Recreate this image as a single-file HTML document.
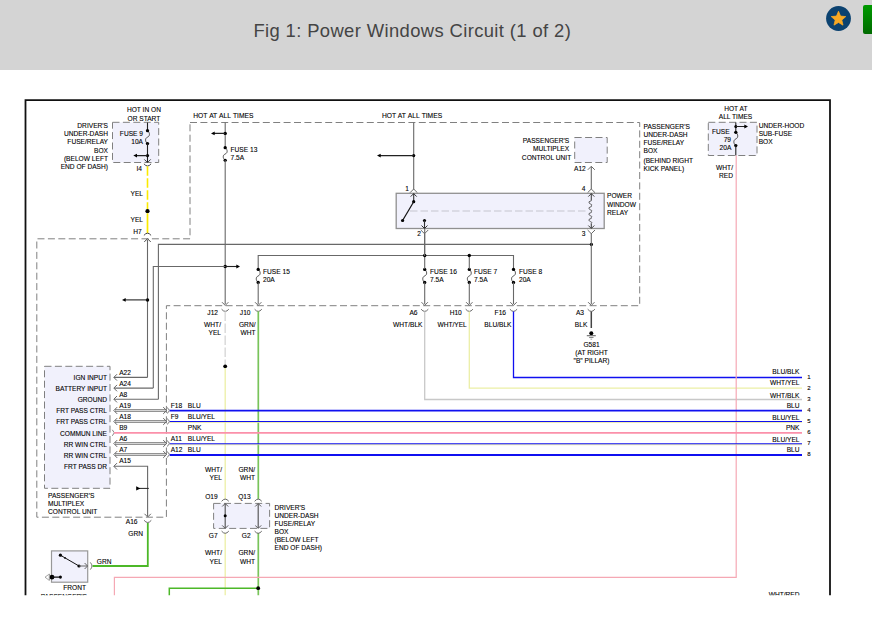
<!DOCTYPE html>
<html><head><meta charset="utf-8"><title>Fig 1: Power Windows Circuit (1 of 2)</title>
<style>
html,body{margin:0;padding:0;background:#fff;}
body{width:872px;height:622px;overflow:hidden;position:relative;font-family:"Liberation Sans",sans-serif;}
#hdr{position:absolute;left:0;top:0;width:872px;height:70px;background:#d4d4d4;}
#ttl{position:absolute;left:253.4px;top:19.9px;font-size:18.4px;color:#444;white-space:nowrap;letter-spacing:0.385px;}
#star{position:absolute;left:826px;top:6px;width:25px;height:25px;}
#btn{position:absolute;left:863px;top:5px;width:20px;height:29px;border-radius:2px;background:linear-gradient(#009a00,#006a00);}
text{font-family:"Liberation Sans",sans-serif;}
</style></head><body>
<div id="hdr"></div>
<div id="ttl">Fig 1: Power Windows Circuit (1 of 2)</div>
<svg id="star" viewBox="0 0 25 25"><circle cx="12.5" cy="12.5" r="12.4" fill="#0b4270"/><polygon points="12.50,5.24 14.52,10.12 19.77,10.58 15.81,14.07 17.01,19.13 12.50,16.46 7.99,19.13 9.19,14.07 5.23,10.58 10.48,10.12" fill="#f7a823" stroke="#f7a823" stroke-width="0.8" stroke-linejoin="round"/></svg>
<div id="btn"></div>
<svg width="872" height="622" viewBox="0 0 872 622" style="position:absolute;left:0;top:0" font-family="Liberation Sans, sans-serif">
<defs><clipPath id="cl"><rect x="0" y="70" width="872" height="525.3"/></clipPath></defs>
<g clip-path="url(#cl)">
<rect x="112.5" y="122.3" width="46.19999999999999" height="40.2" fill="#f1f1fc" stroke="#808080" stroke-width="1" stroke-dasharray="7 3.4"/>
<rect x="574.7" y="137.5" width="32.5" height="25.0" fill="#f1f1fc" stroke="#808080" stroke-width="1" stroke-dasharray="7 3.4"/>
<rect x="708.3" y="122.3" width="48.700000000000045" height="33.2" fill="#f1f1fc" stroke="#808080" stroke-width="1" stroke-dasharray="7 3.4"/>
<rect x="44.5" y="366.3" width="65.5" height="122.0" fill="#f1f1fc" stroke="#808080" stroke-width="1" stroke-dasharray="7 3.4"/>
<rect x="213.6" y="503.4" width="56.00000000000003" height="25.0" fill="#f1f1fc" stroke="#808080" stroke-width="1" stroke-dasharray="7 3.4"/>
<rect x="396.2" y="193.3" width="208.00000000000006" height="35.19999999999999" fill="#f1f1fc" stroke="#909090" stroke-width="1.3"/>
<line x1="410" y1="211" x2="588" y2="211" stroke="#c6c6ce" stroke-width="1.1" stroke-dasharray="7.5 3"/>
<rect x="51.5" y="550.9" width="36.2" height="31.300000000000068" fill="#f1f1fc" stroke="#989898" stroke-width="1.2"/>
<polyline points="190,122.5 639.7,122.5 639.7,305.7 166.4,305.7 166.4,517.2 36.8,517.2 36.8,238.8 190,238.8 190,122.5" fill="none" stroke="#808080" stroke-width="1" stroke-dasharray="7 3.4"/>
<line x1="147.5" y1="122.5" x2="147.5" y2="130.5" stroke="#222" stroke-width="1.1" />
<path d="M147.5,130.7 C150.1,132.7 150.1,136.14999999999998 147.5,137.14999999999998 C144.9,138.14999999999998 144.9,141.6 147.5,143.6" fill="none" stroke="#444" stroke-width="0.9"/>
<circle cx="147.5" cy="130.7" r="1.65" fill="#000"/>
<circle cx="147.5" cy="143.6" r="1.65" fill="#000"/>
<line x1="147.5" y1="143.6" x2="147.5" y2="162" stroke="#222" stroke-width="1.1" />
<circle cx="147.5" cy="155.6" r="1.6" fill="#000"/>
<line x1="147.5" y1="155.6" x2="136" y2="155.6" stroke="#222" stroke-width="1.1" />
<polygon points="133.3,155.6 137.0,153.7 137.0,157.5" fill="#000"/>
<polyline points="144.3,159.4 147.5,162.6 150.7,159.4" fill="none" stroke="#444" stroke-width="1" />
<path d="M143.9,163.8 Q147.5,168.20000000000002 151.1,163.8" fill="none" stroke="#444" stroke-width="1"/>
<line x1="147.5" y1="166.2" x2="147.5" y2="209" stroke="#fbea00" stroke-width="1.6" stroke-dasharray="9.6 2.4"/>
<circle cx="147.5" cy="211.2" r="2.1" fill="#000"/>
<line x1="147.5" y1="213.3" x2="147.5" y2="233" stroke="#fbea00" stroke-width="1.7" />
<path d="M143.9,235.4 Q147.5,231.0 151.1,235.4" fill="none" stroke="#444" stroke-width="1"/>
<polyline points="144.3,241.89999999999998 147.5,238.7 150.7,241.89999999999998" fill="none" stroke="#444" stroke-width="1" />
<line x1="147.5" y1="240" x2="147.5" y2="377.4" stroke="#686868" stroke-width="1.1" />
<circle cx="147.5" cy="299.9" r="1.75" fill="#000"/>
<line x1="147.5" y1="299.9" x2="125" y2="299.9" stroke="#222" stroke-width="1.1" />
<polygon points="122,299.9 125.7,298.0 125.7,301.79999999999995" fill="#000"/>
<text x="143.9" y="111.5" text-anchor="middle" font-size="6.62" fill="#000" stroke="#000" stroke-width="0.1">HOT IN ON</text>
<text x="143.9" y="120.8" text-anchor="middle" font-size="6.62" fill="#000" stroke="#000" stroke-width="0.1">OR START</text>
<text x="108" y="128.1" text-anchor="end" font-size="6.62" fill="#000" stroke="#000" stroke-width="0.1">DRIVER'S</text>
<text x="108" y="136.25" text-anchor="end" font-size="6.62" fill="#000" stroke="#000" stroke-width="0.1">UNDER-DASH</text>
<text x="108" y="144.4" text-anchor="end" font-size="6.62" fill="#000" stroke="#000" stroke-width="0.1">FUSE/RELAY</text>
<text x="108" y="152.55" text-anchor="end" font-size="6.62" fill="#000" stroke="#000" stroke-width="0.1">BOX</text>
<text x="108" y="160.7" text-anchor="end" font-size="6.62" fill="#000" stroke="#000" stroke-width="0.1">(BELOW LEFT</text>
<text x="108" y="168.85" text-anchor="end" font-size="6.62" fill="#000" stroke="#000" stroke-width="0.1">END OF DASH)</text>
<text x="143" y="135.5" text-anchor="end" font-size="6.62" fill="#000" stroke="#000" stroke-width="0.1">FUSE 9</text>
<text x="143" y="144" text-anchor="end" font-size="6.62" fill="#000" stroke="#000" stroke-width="0.1">10A</text>
<text x="142" y="171" text-anchor="end" font-size="6.62" fill="#000" stroke="#000" stroke-width="0.1">I4</text>
<text x="143" y="195.8" text-anchor="end" font-size="6.62" fill="#000" stroke="#000" stroke-width="0.1">YEL</text>
<text x="143" y="221.9" text-anchor="end" font-size="6.62" fill="#000" stroke="#000" stroke-width="0.1">YEL</text>
<text x="141.6" y="234" text-anchor="end" font-size="6.62" fill="#000" stroke="#000" stroke-width="0.1">H7</text>
<text x="223.3" y="118" text-anchor="middle" font-size="6.7" word-spacing="0.5" fill="#000" stroke="#000" stroke-width="0.1">HOT AT ALL TIMES</text>
<line x1="225.2" y1="122.5" x2="225.2" y2="147.5" stroke="#686868" stroke-width="1.1" />
<path d="M225.2,147.7 C227.79999999999998,149.7 227.79999999999998,153.0 225.2,154.0 C222.6,155.0 222.6,158.3 225.2,160.3" fill="none" stroke="#444" stroke-width="0.9"/>
<circle cx="225.2" cy="147.7" r="1.65" fill="#000"/>
<circle cx="225.2" cy="160.3" r="1.65" fill="#000"/>
<line x1="225.2" y1="160.3" x2="225.2" y2="304" stroke="#686868" stroke-width="1.1" />
<circle cx="225.2" cy="133.4" r="1.7" fill="#000"/>
<line x1="225.2" y1="133.4" x2="214" y2="133.4" stroke="#222" stroke-width="1.1" />
<polygon points="211,133.4 214.7,131.5 214.7,135.3" fill="#000"/>
<text x="230.5" y="151.6" text-anchor="start" font-size="6.62" fill="#000" stroke="#000" stroke-width="0.1">FUSE 13</text>
<text x="230.5" y="159.9" text-anchor="start" font-size="6.62" fill="#000" stroke="#000" stroke-width="0.1">7.5A</text>
<circle cx="225.2" cy="266.5" r="1.75" fill="#000"/>
<line x1="225.2" y1="266.5" x2="237" y2="266.5" stroke="#222" stroke-width="1.1" />
<polygon points="240,266.5 236.3,264.6 236.3,268.4" fill="#000"/>
<polyline points="222.0,302.2 225.2,305.4 228.39999999999998,302.2" fill="none" stroke="#686868" stroke-width="1" />
<path d="M221.6,309.2 Q225.2,313.59999999999997 228.79999999999998,309.2" fill="none" stroke="#686868" stroke-width="1"/>
<line x1="225.2" y1="311.5" x2="225.2" y2="366" stroke="#dcdcdc" stroke-width="1.6" stroke-dasharray="9.6 2.4"/>
<circle cx="225.2" cy="366.3" r="1.9" fill="#000"/>
<line x1="225.2" y1="368" x2="225.2" y2="499" stroke="#ecefa6" stroke-width="1.3" />
<line x1="225.2" y1="533" x2="225.2" y2="596" stroke="#ecefa6" stroke-width="1.3" />
<text x="218" y="314.6" text-anchor="end" font-size="6.62" fill="#000" stroke="#000" stroke-width="0.1">J12</text>
<text x="221" y="326.5" text-anchor="end" font-size="6.62" fill="#000" stroke="#000" stroke-width="0.1">WHT/</text>
<text x="221" y="335" text-anchor="end" font-size="6.62" fill="#000" stroke="#000" stroke-width="0.1">YEL</text>
<text x="222" y="471.5" text-anchor="end" font-size="6.62" fill="#000" stroke="#000" stroke-width="0.1">WHT/</text>
<text x="222" y="480" text-anchor="end" font-size="6.62" fill="#000" stroke="#000" stroke-width="0.1">YEL</text>
<text x="222" y="555" text-anchor="end" font-size="6.62" fill="#000" stroke="#000" stroke-width="0.1">WHT/</text>
<text x="222" y="563.5" text-anchor="end" font-size="6.62" fill="#000" stroke="#000" stroke-width="0.1">YEL</text>
<polyline points="153.3,388 153.3,266.5 225.2,266.5" fill="none" stroke="#686868" stroke-width="1.1" />
<polyline points="158.4,399.2 158.4,244.4 591.4,244.4" fill="none" stroke="#686868" stroke-width="1.1" />
<circle cx="591.4" cy="244.4" r="1.6" fill="#000"/>
<polyline points="258.2,269 258.2,255.5 513.5,255.5 513.5,269" fill="none" stroke="#686868" stroke-width="1.1" />
<path d="M258.2,269.4 C260.8,271.4 260.8,274.95 258.2,275.95 C255.6,276.95 255.6,280.5 258.2,282.5" fill="none" stroke="#444" stroke-width="0.9"/>
<circle cx="258.2" cy="269.4" r="1.65" fill="#000"/>
<circle cx="258.2" cy="282.5" r="1.65" fill="#000"/>
<line x1="258.2" y1="282.5" x2="258.2" y2="304" stroke="#686868" stroke-width="1.1" />
<polyline points="255.0,302.2 258.2,305.4 261.4,302.2" fill="none" stroke="#686868" stroke-width="1" />
<path d="M254.6,309.2 Q258.2,313.59999999999997 261.8,309.2" fill="none" stroke="#686868" stroke-width="1"/>
<text x="263" y="274" text-anchor="start" font-size="6.62" fill="#000" stroke="#000" stroke-width="0.1">FUSE 15</text>
<text x="263" y="282.3" text-anchor="start" font-size="6.62" fill="#000" stroke="#000" stroke-width="0.1">20A</text>
<path d="M424.7,269.4 C427.3,271.4 427.3,274.95 424.7,275.95 C422.09999999999997,276.95 422.09999999999997,280.5 424.7,282.5" fill="none" stroke="#444" stroke-width="0.9"/>
<circle cx="424.7" cy="269.4" r="1.65" fill="#000"/>
<circle cx="424.7" cy="282.5" r="1.65" fill="#000"/>
<line x1="424.7" y1="282.5" x2="424.7" y2="304" stroke="#686868" stroke-width="1.1" />
<polyline points="421.5,302.2 424.7,305.4 427.9,302.2" fill="none" stroke="#686868" stroke-width="1" />
<path d="M421.09999999999997,309.2 Q424.7,313.59999999999997 428.3,309.2" fill="none" stroke="#686868" stroke-width="1"/>
<text x="430" y="274" text-anchor="start" font-size="6.62" fill="#000" stroke="#000" stroke-width="0.1">FUSE 16</text>
<text x="430" y="282.3" text-anchor="start" font-size="6.62" fill="#000" stroke="#000" stroke-width="0.1">7.5A</text>
<path d="M469.3,269.4 C471.90000000000003,271.4 471.90000000000003,274.95 469.3,275.95 C466.7,276.95 466.7,280.5 469.3,282.5" fill="none" stroke="#444" stroke-width="0.9"/>
<circle cx="469.3" cy="269.4" r="1.65" fill="#000"/>
<circle cx="469.3" cy="282.5" r="1.65" fill="#000"/>
<line x1="469.3" y1="282.5" x2="469.3" y2="304" stroke="#686868" stroke-width="1.1" />
<polyline points="466.1,302.2 469.3,305.4 472.5,302.2" fill="none" stroke="#686868" stroke-width="1" />
<path d="M465.7,309.2 Q469.3,313.59999999999997 472.90000000000003,309.2" fill="none" stroke="#686868" stroke-width="1"/>
<text x="474" y="274" text-anchor="start" font-size="6.62" fill="#000" stroke="#000" stroke-width="0.1">FUSE 7</text>
<text x="474" y="282.3" text-anchor="start" font-size="6.62" fill="#000" stroke="#000" stroke-width="0.1">7.5A</text>
<path d="M513.5,269.4 C516.1,271.4 516.1,274.95 513.5,275.95 C510.9,276.95 510.9,280.5 513.5,282.5" fill="none" stroke="#444" stroke-width="0.9"/>
<circle cx="513.5" cy="269.4" r="1.65" fill="#000"/>
<circle cx="513.5" cy="282.5" r="1.65" fill="#000"/>
<line x1="513.5" y1="282.5" x2="513.5" y2="304" stroke="#686868" stroke-width="1.1" />
<polyline points="510.3,302.2 513.5,305.4 516.7,302.2" fill="none" stroke="#686868" stroke-width="1" />
<path d="M509.9,309.2 Q513.5,313.59999999999997 517.1,309.2" fill="none" stroke="#686868" stroke-width="1"/>
<text x="519" y="274" text-anchor="start" font-size="6.62" fill="#000" stroke="#000" stroke-width="0.1">FUSE 8</text>
<text x="519" y="282.3" text-anchor="start" font-size="6.62" fill="#000" stroke="#000" stroke-width="0.1">20A</text>
<line x1="424.7" y1="228.5" x2="424.7" y2="269" stroke="#686868" stroke-width="1.1" />
<line x1="469.3" y1="255.5" x2="469.3" y2="269" stroke="#686868" stroke-width="1.1" />
<circle cx="424.7" cy="255.5" r="1.7" fill="#000"/>
<circle cx="469.3" cy="255.5" r="1.7" fill="#000"/>
<line x1="258.3" y1="311.3" x2="258.3" y2="499" stroke="#78c45a" stroke-width="1.7" />
<line x1="258.3" y1="533" x2="258.3" y2="596" stroke="#78c45a" stroke-width="1.7" />
<text x="250.5" y="314.5" text-anchor="end" font-size="6.62" fill="#000" stroke="#000" stroke-width="0.1">J10</text>
<text x="255.5" y="326.5" text-anchor="end" font-size="6.62" fill="#000" stroke="#000" stroke-width="0.1">GRN/</text>
<text x="255.5" y="335" text-anchor="end" font-size="6.62" fill="#000" stroke="#000" stroke-width="0.1">WHT</text>
<text x="255" y="471.5" text-anchor="end" font-size="6.62" fill="#000" stroke="#000" stroke-width="0.1">GRN/</text>
<text x="255" y="480" text-anchor="end" font-size="6.62" fill="#000" stroke="#000" stroke-width="0.1">WHT</text>
<text x="255" y="555" text-anchor="end" font-size="6.62" fill="#000" stroke="#000" stroke-width="0.1">GRN/</text>
<text x="255" y="563.5" text-anchor="end" font-size="6.62" fill="#000" stroke="#000" stroke-width="0.1">WHT</text>
<polyline points="424.7,311.5 424.7,399.5 802,399.5" fill="none" stroke="#c8c8c8" stroke-width="1.3" />
<text x="417.5" y="314.5" text-anchor="end" font-size="6.62" fill="#000" stroke="#000" stroke-width="0.1">A6</text>
<text x="422.5" y="326.5" text-anchor="end" font-size="6.62" fill="#000" stroke="#000" stroke-width="0.1">WHT/BLK</text>
<polyline points="469.3,311.5 469.3,388.2 802,388.2" fill="none" stroke="#ecefa6" stroke-width="1.3" />
<text x="461.8" y="314.5" text-anchor="end" font-size="6.62" fill="#000" stroke="#000" stroke-width="0.1">H10</text>
<text x="466.8" y="326.5" text-anchor="end" font-size="6.62" fill="#000" stroke="#000" stroke-width="0.1">WHT/YEL</text>
<polyline points="513.5,311.5 513.5,377.5 802,377.5" fill="none" stroke="#1010f0" stroke-width="1.3" />
<text x="506" y="314.5" text-anchor="end" font-size="6.62" fill="#000" stroke="#000" stroke-width="0.1">F16</text>
<text x="511.5" y="326.5" text-anchor="end" font-size="6.62" fill="#000" stroke="#000" stroke-width="0.1">BLU/BLK</text>
<text x="412" y="118" text-anchor="middle" font-size="6.7" word-spacing="0.5" fill="#000" stroke="#000" stroke-width="0.1">HOT AT ALL TIMES</text>
<line x1="413.7" y1="122.5" x2="413.7" y2="189.5" stroke="#686868" stroke-width="1.1" />
<circle cx="413.7" cy="155.6" r="1.6" fill="#000"/>
<line x1="413.7" y1="155.6" x2="380" y2="155.6" stroke="#222" stroke-width="1.1" />
<polygon points="377,155.6 380.7,153.7 380.7,157.5" fill="#000"/>
<polyline points="410.0,192.7 413.7,189 417.4,192.7" fill="none" stroke="#686868" stroke-width="1" />
<line x1="413.7" y1="193.5" x2="413.7" y2="201.7" stroke="#333" stroke-width="1.1" />
<polyline points="410.7,196.6 413.7,193.6 416.7,196.6" fill="none" stroke="#333" stroke-width="1" />
<circle cx="413.7" cy="201.7" r="1.6" fill="#000"/>
<circle cx="402.6" cy="220.5" r="1.6" fill="#000"/>
<circle cx="424.5" cy="220.5" r="1.6" fill="#000"/>
<line x1="413.7" y1="201.7" x2="402.6" y2="220.5" stroke="#111" stroke-width="1.2" />
<line x1="424.5" y1="220.5" x2="424.5" y2="228" stroke="#333" stroke-width="1.1" />
<polyline points="421.5,225.5 424.5,228.5 427.5,225.5" fill="none" stroke="#333" stroke-width="1" />
<polyline points="420.8,230.0 424.5,233.7 428.2,230.0" fill="none" stroke="#686868" stroke-width="1" />
<line x1="424.6" y1="233.2" x2="424.6" y2="256" stroke="#686868" stroke-width="1.1" />
<text x="409" y="190.5" text-anchor="end" font-size="6.62" fill="#000" stroke="#000" stroke-width="0.1">1</text>
<text x="421" y="235.5" text-anchor="end" font-size="6.62" fill="#000" stroke="#000" stroke-width="0.1">2</text>
<line x1="591.3" y1="166.5" x2="591.3" y2="189.5" stroke="#686868" stroke-width="1.1" />
<polyline points="587.8,169.8 591.3,166.3 594.8,169.8" fill="none" stroke="#686868" stroke-width="1" />
<polyline points="587.5999999999999,192.7 591.3,189 595.0,192.7" fill="none" stroke="#686868" stroke-width="1" />
<polyline points="588.3,196.6 591.3,193.6 594.3,196.6" fill="none" stroke="#444" stroke-width="1" />
<polyline points="588.3,225.5 591.3,228.5 594.3,225.5" fill="none" stroke="#444" stroke-width="1" />
<polyline points="587.5999999999999,230.0 591.3,233.7 595.0,230.0" fill="none" stroke="#686868" stroke-width="1" />
<line x1="591.3" y1="193.5" x2="591.3" y2="200" stroke="#444" stroke-width="1.1" />
<line x1="591.3" y1="223.5" x2="591.3" y2="228" stroke="#444" stroke-width="1.1" />
<path d="M591.3,200 C592.5,201.5 587.9,200.7375 589.0999999999999,202.9375 C589.9,204.5375 592.9,203.875 591.3,205.875 C592.5,207.375 587.9,206.6125 589.0999999999999,208.8125 C589.9,210.4125 592.9,209.75 591.3,211.75 C592.5,213.25 587.9,212.4875 589.0999999999999,214.6875 C589.9,216.2875 592.9,215.625 591.3,217.625 C592.5,219.125 587.9,218.3625 589.0999999999999,220.5625 C589.9,222.1625 592.9,221.5 591.3,223.5" fill="none" stroke="#4a4a4a" stroke-width="0.9"/>
<line x1="591.3" y1="233.2" x2="591.3" y2="304" stroke="#686868" stroke-width="1.1" />
<polyline points="588.0999999999999,302.2 591.3,305.4 594.5,302.2" fill="none" stroke="#686868" stroke-width="1" />
<path d="M587.6999999999999,309.2 Q591.3,313.59999999999997 594.9,309.2" fill="none" stroke="#686868" stroke-width="1"/>
<line x1="591.3" y1="311.5" x2="591.3" y2="328" stroke="#444" stroke-width="1.5" />
<circle cx="591.3" cy="333.2" r="2" fill="#000"/>
<line x1="586.8" y1="335.7" x2="595.8" y2="335.7" stroke="#666" stroke-width="1.1" />
<line x1="589.0999999999999" y1="337.5" x2="593.5" y2="337.5" stroke="#888" stroke-width="1.1" />
<line x1="590.5" y1="339.2" x2="592.0999999999999" y2="339.2" stroke="#aaa" stroke-width="1.1" />
<text x="585.5" y="191" text-anchor="end" font-size="6.62" fill="#000" stroke="#000" stroke-width="0.1">4</text>
<text x="585.5" y="236" text-anchor="end" font-size="6.62" fill="#000" stroke="#000" stroke-width="0.1">3</text>
<text x="574" y="171" text-anchor="start" font-size="6.62" fill="#000" stroke="#000" stroke-width="0.1">A12</text>
<text x="607" y="198.2" text-anchor="start" font-size="6.62" fill="#000" stroke="#000" stroke-width="0.1">POWER</text>
<text x="607" y="206.6" text-anchor="start" font-size="6.62" fill="#000" stroke="#000" stroke-width="0.1">WINDOW</text>
<text x="607" y="215.0" text-anchor="start" font-size="6.62" fill="#000" stroke="#000" stroke-width="0.1">RELAY</text>
<text x="569.2" y="142.6" text-anchor="end" font-size="6.62" fill="#000" stroke="#000" stroke-width="0.1">PASSENGER'S</text>
<text x="569.2" y="151.2" text-anchor="end" font-size="6.62" fill="#000" stroke="#000" stroke-width="0.1">MULTIPLEX</text>
<text x="571.2" y="159.8" text-anchor="end" font-size="6.62" fill="#000" stroke="#000" stroke-width="0.1">CONTROL UNIT</text>
<text x="643.5" y="128.5" text-anchor="start" font-size="6.62" fill="#000" stroke="#000" stroke-width="0.1">PASSENGER'S</text>
<text x="643.5" y="136.6" text-anchor="start" font-size="6.62" fill="#000" stroke="#000" stroke-width="0.1">UNDER-DASH</text>
<text x="643.5" y="144.7" text-anchor="start" font-size="6.62" fill="#000" stroke="#000" stroke-width="0.1">FUSE/RELAY</text>
<text x="643.5" y="152.8" text-anchor="start" font-size="6.62" fill="#000" stroke="#000" stroke-width="0.1">BOX</text>
<text x="643.5" y="162.5" text-anchor="start" font-size="6.62" fill="#000" stroke="#000" stroke-width="0.1">(BEHIND RIGHT</text>
<text x="643.5" y="170.6" text-anchor="start" font-size="6.62" fill="#000" stroke="#000" stroke-width="0.1">KICK PANEL)</text>
<text x="584" y="314.5" text-anchor="end" font-size="6.62" fill="#000" stroke="#000" stroke-width="0.1">A3</text>
<text x="587.3" y="326.5" text-anchor="end" font-size="6.62" fill="#000" stroke="#000" stroke-width="0.1">BLK</text>
<text x="591.5" y="346.5" text-anchor="middle" font-size="6.62" fill="#000" stroke="#000" stroke-width="0.1">G581</text>
<text x="591.5" y="354.5" text-anchor="middle" font-size="6.62" fill="#000" stroke="#000" stroke-width="0.1">(AT RIGHT</text>
<text x="591.5" y="362.5" text-anchor="middle" font-size="6.62" fill="#000" stroke="#000" stroke-width="0.1">"B" PILLAR)</text>
<line x1="735.8" y1="122.5" x2="735.8" y2="131" stroke="#222" stroke-width="1.1" />
<circle cx="735.8" cy="126.5" r="1.5" fill="#000"/>
<line x1="735.8" y1="126.5" x2="745" y2="126.5" stroke="#222" stroke-width="1.1" />
<polygon points="748,126.5 744.3,124.6 744.3,128.4" fill="#000"/>
<path d="M735.8,132.3 C738.4,134.3 738.4,137.95 735.8,138.95 C733.1999999999999,139.95 733.1999999999999,143.6 735.8,145.6" fill="none" stroke="#444" stroke-width="0.9"/>
<circle cx="735.8" cy="132.3" r="1.65" fill="#000"/>
<circle cx="735.8" cy="145.6" r="1.65" fill="#000"/>
<line x1="735.8" y1="145.6" x2="735.8" y2="155.5" stroke="#222" stroke-width="1.1" />
<polyline points="736.1999999999999,155.5 736.1999999999999,577.4 114.4,577.4 114.4,596" fill="none" stroke="#f5a8b4" stroke-width="1.2" />
<text x="735.8" y="110.5" text-anchor="middle" font-size="6.62" fill="#000" stroke="#000" stroke-width="0.1">HOT AT</text>
<text x="735.5" y="118.5" text-anchor="middle" font-size="6.62" fill="#000" stroke="#000" stroke-width="0.1">ALL TIMES</text>
<text x="729.6" y="133.5" text-anchor="end" font-size="6.62" fill="#000" stroke="#000" stroke-width="0.1">FUSE</text>
<text x="731" y="141.6" text-anchor="end" font-size="6.62" fill="#000" stroke="#000" stroke-width="0.1">79</text>
<text x="731.3" y="149.7" text-anchor="end" font-size="6.62" fill="#000" stroke="#000" stroke-width="0.1">20A</text>
<text x="758.7" y="127.5" text-anchor="start" font-size="6.62" fill="#000" stroke="#000" stroke-width="0.1">UNDER-HOOD</text>
<text x="758.7" y="135.6" text-anchor="start" font-size="6.62" fill="#000" stroke="#000" stroke-width="0.1">SUB-FUSE</text>
<text x="758.7" y="143.7" text-anchor="start" font-size="6.62" fill="#000" stroke="#000" stroke-width="0.1">BOX</text>
<text x="733" y="169.5" text-anchor="end" font-size="6.62" fill="#000" stroke="#000" stroke-width="0.1">WHT/</text>
<text x="733" y="177.5" text-anchor="end" font-size="6.62" fill="#000" stroke="#000" stroke-width="0.1">RED</text>
<text x="799.5" y="597.2" text-anchor="end" font-size="6.62" fill="#000" stroke="#000" stroke-width="0.1">WHT/RED</text>
<text x="107" y="379.79999999999995" text-anchor="end" font-size="6.62" fill="#000" stroke="#000" stroke-width="0.1">IGN INPUT</text>
<text x="119.2" y="374.79999999999995" text-anchor="start" font-size="6.62" fill="#000" stroke="#000" stroke-width="0.1">A22</text>
<text x="107" y="390.6" text-anchor="end" font-size="6.62" fill="#000" stroke="#000" stroke-width="0.1">BATTERY INPUT</text>
<text x="119.2" y="385.5" text-anchor="start" font-size="6.62" fill="#000" stroke="#000" stroke-width="0.1">A24</text>
<text x="107" y="401.79999999999995" text-anchor="end" font-size="6.62" fill="#000" stroke="#000" stroke-width="0.1">GROUND</text>
<text x="119.2" y="396.59999999999997" text-anchor="start" font-size="6.62" fill="#000" stroke="#000" stroke-width="0.1">A8</text>
<text x="107" y="413.2" text-anchor="end" font-size="6.62" fill="#000" stroke="#000" stroke-width="0.1">FRT PASS CTRL</text>
<text x="119.2" y="407.9" text-anchor="start" font-size="6.62" fill="#000" stroke="#000" stroke-width="0.1">A19</text>
<text x="107" y="424.29999999999995" text-anchor="end" font-size="6.62" fill="#000" stroke="#000" stroke-width="0.1">FRT PASS CTRL</text>
<text x="119.2" y="418.9" text-anchor="start" font-size="6.62" fill="#000" stroke="#000" stroke-width="0.1">A18</text>
<text x="107" y="435.7" text-anchor="end" font-size="6.62" fill="#000" stroke="#000" stroke-width="0.1">COMMUN LINE</text>
<text x="119.2" y="430.2" text-anchor="start" font-size="6.62" fill="#000" stroke="#000" stroke-width="0.1">B9</text>
<text x="107" y="446.8" text-anchor="end" font-size="6.62" fill="#000" stroke="#000" stroke-width="0.1">RR WIN CTRL</text>
<text x="119.2" y="441.2" text-anchor="start" font-size="6.62" fill="#000" stroke="#000" stroke-width="0.1">A6</text>
<text x="107" y="458.09999999999997" text-anchor="end" font-size="6.62" fill="#000" stroke="#000" stroke-width="0.1">RR WIN CTRL</text>
<text x="119.2" y="452.4" text-anchor="start" font-size="6.62" fill="#000" stroke="#000" stroke-width="0.1">A7</text>
<text x="107" y="469.2" text-anchor="end" font-size="6.62" fill="#000" stroke="#000" stroke-width="0.1">FRT PASS DR</text>
<text x="119.2" y="463.4" text-anchor="start" font-size="6.62" fill="#000" stroke="#000" stroke-width="0.1">A15</text>
<line x1="114" y1="377.4" x2="147.5" y2="377.4" stroke="#686868" stroke-width="1.1" />
<polyline points="117.0,374.2 113.8,377.4 117.0,380.59999999999997" fill="none" stroke="#686868" stroke-width="1" />
<line x1="114" y1="388.1" x2="153.3" y2="388.1" stroke="#686868" stroke-width="1.1" />
<polyline points="117.0,384.90000000000003 113.8,388.1 117.0,391.3" fill="none" stroke="#686868" stroke-width="1" />
<line x1="114" y1="399.2" x2="158.4" y2="399.2" stroke="#686868" stroke-width="1.1" />
<polyline points="117.0,396.0 113.8,399.2 117.0,402.4" fill="none" stroke="#686868" stroke-width="1" />
<line x1="115" y1="410.5" x2="165.5" y2="410.5" stroke="#939393" stroke-width="2.9" />
<line x1="115.5" y1="410.5" x2="165" y2="410.5" stroke="#dedede" stroke-width="0.9" />
<polyline points="117.2,407.1 113.8,410.5 117.2,413.9" fill="none" stroke="#686868" stroke-width="1" />
<polyline points="163.2,407.1 166.6,410.5 163.2,413.9" fill="none" stroke="#686868" stroke-width="1" />
<path d="M167,407.6 Q171.6,410.5 167,413.4" fill="#fff" stroke="#666" stroke-width="0.9"/>
<line x1="169.8" y1="410.6" x2="802" y2="410.6" stroke="#1010f0" stroke-width="1.8" />
<text x="170.7" y="408.0" text-anchor="start" font-size="6.62" fill="#000" stroke="#000" stroke-width="0.1">F18</text>
<text x="187.8" y="408.0" text-anchor="start" font-size="6.62" fill="#000" stroke="#000" stroke-width="0.1">BLU</text>
<line x1="115" y1="421.5" x2="165.5" y2="421.5" stroke="#939393" stroke-width="2.9" />
<line x1="115.5" y1="421.5" x2="165" y2="421.5" stroke="#dedede" stroke-width="0.9" />
<polyline points="117.2,418.1 113.8,421.5 117.2,424.9" fill="none" stroke="#686868" stroke-width="1" />
<polyline points="163.2,418.1 166.6,421.5 163.2,424.9" fill="none" stroke="#686868" stroke-width="1" />
<path d="M167,418.6 Q171.6,421.5 167,424.4" fill="#fff" stroke="#666" stroke-width="0.9"/>
<line x1="169.8" y1="422.4" x2="802" y2="422.4" stroke="#e6e6a0" stroke-width="0.9" />
<line x1="169.8" y1="421.5" x2="802" y2="421.5" stroke="#1010f0" stroke-width="1.1" />
<text x="170.7" y="418.9" text-anchor="start" font-size="6.62" fill="#000" stroke="#000" stroke-width="0.1">F9</text>
<text x="187.8" y="418.9" text-anchor="start" font-size="6.62" fill="#000" stroke="#000" stroke-width="0.1">BLU/YEL</text>
<line x1="115" y1="443.5" x2="165.5" y2="443.5" stroke="#939393" stroke-width="2.9" />
<line x1="115.5" y1="443.5" x2="165" y2="443.5" stroke="#dedede" stroke-width="0.9" />
<polyline points="117.2,440.1 113.8,443.5 117.2,446.9" fill="none" stroke="#686868" stroke-width="1" />
<polyline points="163.2,440.1 166.6,443.5 163.2,446.9" fill="none" stroke="#686868" stroke-width="1" />
<path d="M167,440.6 Q171.6,443.5 167,446.4" fill="#fff" stroke="#666" stroke-width="0.9"/>
<line x1="169.8" y1="444.7" x2="802" y2="444.7" stroke="#e6e6a0" stroke-width="0.9" />
<line x1="169.8" y1="443.8" x2="802" y2="443.8" stroke="#1010f0" stroke-width="1.1" />
<text x="170.7" y="441.2" text-anchor="start" font-size="6.62" fill="#000" stroke="#000" stroke-width="0.1">A11</text>
<text x="187.8" y="441.2" text-anchor="start" font-size="6.62" fill="#000" stroke="#000" stroke-width="0.1">BLU/YEL</text>
<line x1="115" y1="454.5" x2="165.5" y2="454.5" stroke="#939393" stroke-width="2.9" />
<line x1="115.5" y1="454.5" x2="165" y2="454.5" stroke="#dedede" stroke-width="0.9" />
<polyline points="117.2,451.1 113.8,454.5 117.2,457.9" fill="none" stroke="#686868" stroke-width="1" />
<polyline points="163.2,451.1 166.6,454.5 163.2,457.9" fill="none" stroke="#686868" stroke-width="1" />
<path d="M167,451.6 Q171.6,454.5 167,457.4" fill="#fff" stroke="#666" stroke-width="0.9"/>
<line x1="169.8" y1="455" x2="802" y2="455" stroke="#1010f0" stroke-width="1.8" />
<text x="170.7" y="452.4" text-anchor="start" font-size="6.62" fill="#000" stroke="#000" stroke-width="0.1">A12</text>
<text x="187.8" y="452.4" text-anchor="start" font-size="6.62" fill="#000" stroke="#000" stroke-width="0.1">BLU</text>
<polyline points="112.3,429.8 114.3,432.8 112.3,435.8" fill="none" stroke="#888" stroke-width="1" />
<line x1="114" y1="432.8" x2="802" y2="432.8" stroke="#fb90aa" stroke-width="1.8" />
<text x="187.8" y="430.2" text-anchor="start" font-size="6.62" fill="#000" stroke="#000" stroke-width="0.1">PNK</text>
<polyline points="114,466.3 147.6,466.3 147.6,516" fill="none" stroke="#686868" stroke-width="1.1" />
<polyline points="117.0,463.1 113.8,466.3 117.0,469.5" fill="none" stroke="#686868" stroke-width="1" />
<line x1="139" y1="488.4" x2="148.8" y2="488.4" stroke="#222" stroke-width="1" />
<polygon points="136.2,486.2 140.4,488.4 136.2,490.6" fill="#000"/>
<polyline points="144.5,513.8 147.7,517 150.89999999999998,513.8" fill="none" stroke="#686868" stroke-width="1" />
<path d="M144.1,520.3 Q147.7,524.6999999999999 151.29999999999998,520.3" fill="none" stroke="#686868" stroke-width="1"/>
<polyline points="147.8,523 147.8,566 92.5,566" fill="none" stroke="#4cb828" stroke-width="1.8" />
<text x="137.5" y="523.5" text-anchor="end" font-size="6.62" fill="#000" stroke="#000" stroke-width="0.1">A16</text>
<text x="143" y="535.5" text-anchor="end" font-size="6.62" fill="#000" stroke="#000" stroke-width="0.1">GRN</text>
<text x="96.8" y="563.5" text-anchor="start" font-size="6.62" fill="#000" stroke="#000" stroke-width="0.1">GRN</text>
<text x="48" y="497.5" text-anchor="start" font-size="6.62" fill="#000" stroke="#000" stroke-width="0.1">PASSENGER'S</text>
<text x="48" y="505.6" text-anchor="start" font-size="6.62" fill="#000" stroke="#000" stroke-width="0.1">MULTIPLEX</text>
<text x="48" y="513.7" text-anchor="start" font-size="6.62" fill="#000" stroke="#000" stroke-width="0.1">CONTROL UNIT</text>
<text x="799.5" y="373.9" text-anchor="end" font-size="6.62" fill="#000" stroke="#000" stroke-width="0.1">BLU/BLK</text>
<text x="807.2" y="378.9" text-anchor="start" font-size="6" fill="#000" stroke="#000" stroke-width="0.1">1</text>
<text x="799.5" y="384.59999999999997" text-anchor="end" font-size="6.62" fill="#000" stroke="#000" stroke-width="0.1">WHT/YEL</text>
<text x="807.2" y="389.59999999999997" text-anchor="start" font-size="6" fill="#000" stroke="#000" stroke-width="0.1">2</text>
<text x="799.5" y="397.59999999999997" text-anchor="end" font-size="6.62" fill="#000" stroke="#000" stroke-width="0.1">WHT/BLK</text>
<text x="807.2" y="400.9" text-anchor="start" font-size="6" fill="#000" stroke="#000" stroke-width="0.1">3</text>
<text x="799.5" y="407.9" text-anchor="end" font-size="6.62" fill="#000" stroke="#000" stroke-width="0.1">BLU</text>
<text x="807.2" y="411.9" text-anchor="start" font-size="6" fill="#000" stroke="#000" stroke-width="0.1">4</text>
<text x="799.5" y="419.59999999999997" text-anchor="end" font-size="6.62" fill="#000" stroke="#000" stroke-width="0.1">BLU/YEL</text>
<text x="807.2" y="422.9" text-anchor="start" font-size="6" fill="#000" stroke="#000" stroke-width="0.1">5</text>
<text x="799.5" y="430.2" text-anchor="end" font-size="6.62" fill="#000" stroke="#000" stroke-width="0.1">PNK</text>
<text x="807.2" y="434.2" text-anchor="start" font-size="6" fill="#000" stroke="#000" stroke-width="0.1">6</text>
<text x="799.5" y="441.9" text-anchor="end" font-size="6.62" fill="#000" stroke="#000" stroke-width="0.1">BLU/YEL</text>
<text x="807.2" y="445.2" text-anchor="start" font-size="6" fill="#000" stroke="#000" stroke-width="0.1">7</text>
<text x="799.5" y="452.4" text-anchor="end" font-size="6.62" fill="#000" stroke="#000" stroke-width="0.1">BLU</text>
<text x="807.2" y="456.4" text-anchor="start" font-size="6" fill="#000" stroke="#000" stroke-width="0.1">8</text>
<path d="M221.6,501.3 Q225.2,496.90000000000003 228.79999999999998,501.3" fill="none" stroke="#686868" stroke-width="1"/>
<path d="M221.6,531.1 Q225.2,535.5 228.79999999999998,531.1" fill="none" stroke="#686868" stroke-width="1"/>
<line x1="225.2" y1="504" x2="225.2" y2="528" stroke="#5a5a5a" stroke-width="1.2" />
<polyline points="222.2,506.5 225.2,503.5 228.2,506.5" fill="none" stroke="#5a5a5a" stroke-width="1" />
<polyline points="222.2,525.4 225.2,528.4 228.2,525.4" fill="none" stroke="#5a5a5a" stroke-width="1" />
<text x="217.7" y="498.8" text-anchor="end" font-size="6.62" fill="#000" stroke="#000" stroke-width="0.1">O19</text>
<text x="217.7" y="538" text-anchor="end" font-size="6.62" fill="#000" stroke="#000" stroke-width="0.1">G7</text>
<path d="M254.6,501.3 Q258.2,496.90000000000003 261.8,501.3" fill="none" stroke="#686868" stroke-width="1"/>
<path d="M254.6,531.1 Q258.2,535.5 261.8,531.1" fill="none" stroke="#686868" stroke-width="1"/>
<line x1="258.2" y1="504" x2="258.2" y2="528" stroke="#5a5a5a" stroke-width="1.2" />
<polyline points="255.2,506.5 258.2,503.5 261.2,506.5" fill="none" stroke="#5a5a5a" stroke-width="1" />
<polyline points="255.2,525.4 258.2,528.4 261.2,525.4" fill="none" stroke="#5a5a5a" stroke-width="1" />
<text x="250.7" y="498.8" text-anchor="end" font-size="6.62" fill="#000" stroke="#000" stroke-width="0.1">Q13</text>
<text x="250.7" y="538" text-anchor="end" font-size="6.62" fill="#000" stroke="#000" stroke-width="0.1">G2</text>
<circle cx="225.2" cy="515.8" r="1.5" fill="#000"/>
<text x="274.5" y="509.5" text-anchor="start" font-size="6.62" fill="#000" stroke="#000" stroke-width="0.1">DRIVER'S</text>
<text x="274.5" y="517.65" text-anchor="start" font-size="6.62" fill="#000" stroke="#000" stroke-width="0.1">UNDER-DASH</text>
<text x="274.5" y="525.8" text-anchor="start" font-size="6.62" fill="#000" stroke="#000" stroke-width="0.1">FUSE/RELAY</text>
<text x="274.5" y="533.95" text-anchor="start" font-size="6.62" fill="#000" stroke="#000" stroke-width="0.1">BOX</text>
<text x="274.5" y="542.1" text-anchor="start" font-size="6.62" fill="#000" stroke="#000" stroke-width="0.1">(BELOW LEFT</text>
<text x="274.5" y="550.25" text-anchor="start" font-size="6.62" fill="#000" stroke="#000" stroke-width="0.1">END OF DASH)</text>
<polyline points="169.3,596 169.3,588.2 258.2,588.2" fill="none" stroke="#4cb828" stroke-width="1.5" />
<circle cx="258.2" cy="588.2" r="1.9" fill="#000"/>
<circle cx="60.4" cy="555.2" r="1.6" fill="#000"/>
<circle cx="79" cy="566" r="1.6" fill="#000"/>
<circle cx="52" cy="577.2" r="2.35" fill="#000"/>
<circle cx="60.4" cy="577.1" r="1.55" fill="#000"/>
<circle cx="65" cy="557.9" r="0.9" fill="#000"/>
<line x1="60.4" y1="555.2" x2="79" y2="566" stroke="#111" stroke-width="1" />
<line x1="52" y1="577.1" x2="60.4" y2="577.1" stroke="#111" stroke-width="1.1" />
<line x1="79" y1="566" x2="87.3" y2="566" stroke="#666" stroke-width="1" />
<polyline points="84.6,563 87.6,566 84.6,569" fill="none" stroke="#555" stroke-width="0.9" />
<path d="M90.3,562.4 Q93.6,566 90.3,569.6" fill="none" stroke="#777" stroke-width="1"/>
<polyline points="48.8,574.4 45,577.2 48.8,580" fill="none" stroke="#999" stroke-width="0.9" />
<line x1="49.3" y1="573.8" x2="49.3" y2="580.6" stroke="#888" stroke-width="1" />
<text x="86" y="590.2" text-anchor="end" font-size="6.62" fill="#000" stroke="#000" stroke-width="0.1">FRONT</text>
<text x="87" y="598.7" text-anchor="end" font-size="6.62" fill="#000" stroke="#000" stroke-width="0.1">PASSENGER'S</text>
<path d="M25.5,596 V100.2 H830 V596" fill="none" stroke="#111" stroke-width="1.8"/>
</g></svg>
</body></html>
